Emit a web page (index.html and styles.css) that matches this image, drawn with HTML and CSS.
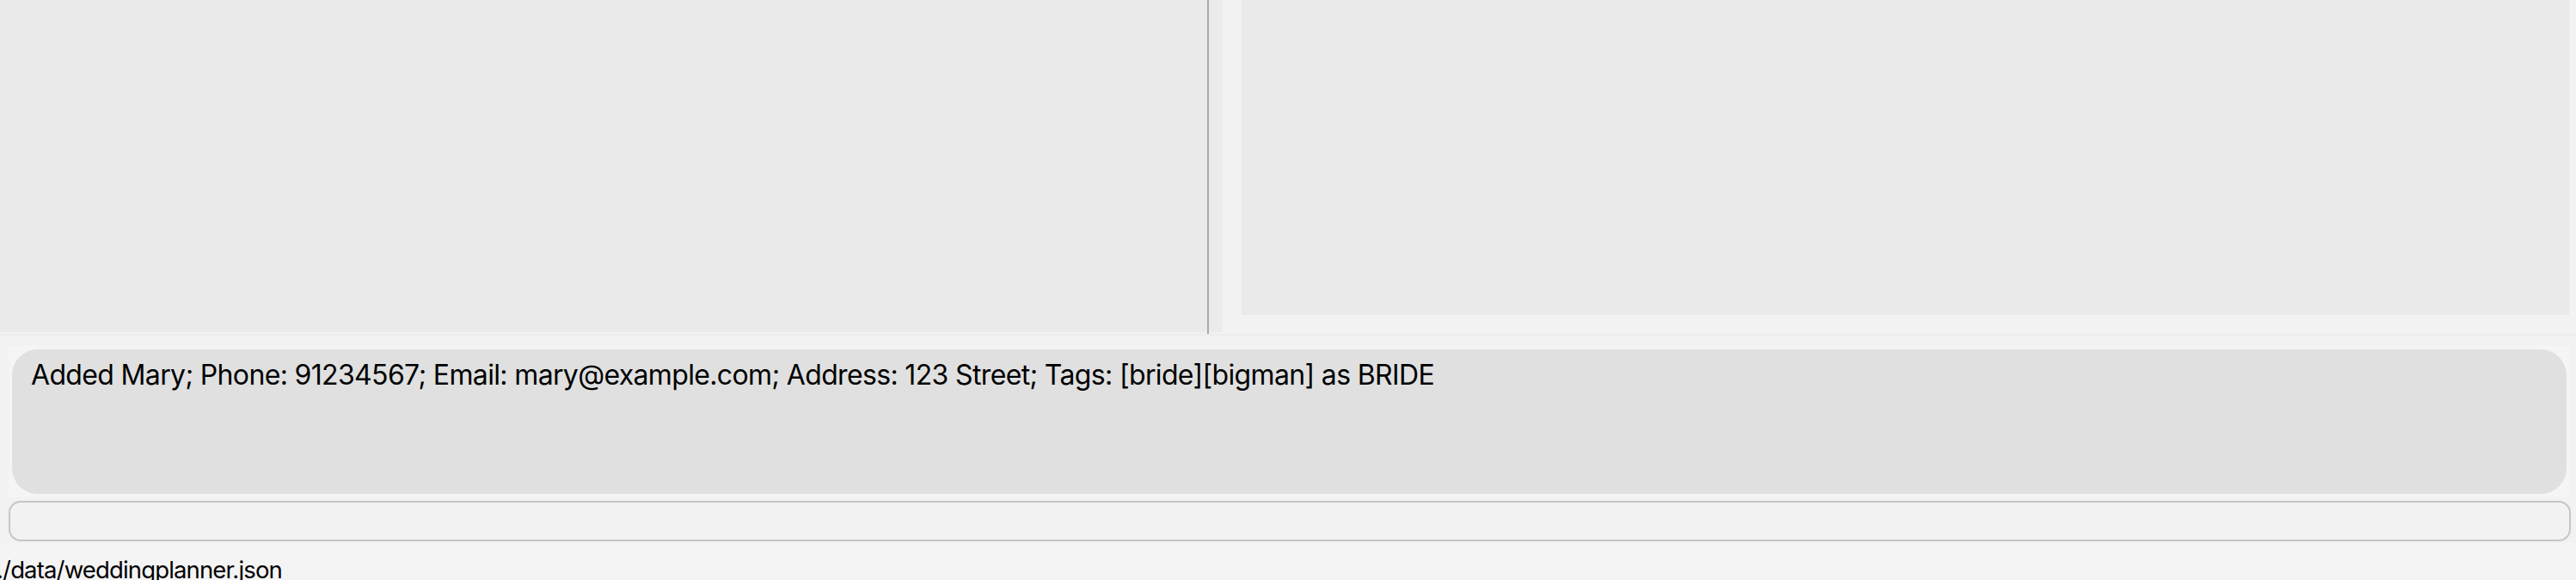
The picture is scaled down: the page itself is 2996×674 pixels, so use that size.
FILE: index.html
```html
<!DOCTYPE html>
<html>
<head>
<meta charset="utf-8">
<link rel="stylesheet" href="styles.css">
</head>
<body>
<div class="app">
  <div class="split">
    <div class="list-pane"></div>
    <div class="divider"></div>
    <div class="right-pane">
      <div class="right-inner">
        <div class="detail-panel"></div>
      </div>
    </div>
  </div>
  <div class="sep"></div>
  <div class="result-wrap">
    <div class="result-frame">
      <div class="result-box">Added Mary; Phone: 91234567; Email: mary@example.com; Address: 123 Street; Tags: [bride][bigman] as BRIDE</div>
    </div>
  </div>
  <div class="command-wrap">
    <div class="command-box"></div>
  </div>
  <div class="status-bar"><span class="status-text">./data/weddingplanner.json</span></div>
</div>
</body>
</html>
```
FILE: styles.css
```css
html, body {
  margin: 0;
  padding: 0;
  background: #f4f4f4;
  overflow: hidden;
}
.app {
  width: 2996px;
  height: 674px;
  display: flex;
  flex-direction: column;
  overflow: hidden;
  font-family: Inter, "Noto Sans", sans-serif;
  color: #000;
}
.app > * {
  flex: none;
}
.split {
  height: 388px;
  display: flex;
  background: #f2f2f2;
}
.list-pane {
  width: 1404px;
  height: 386px;
  background: #eaeaea;
}
.divider {
  width: 2px;
  background: #aaaaaa;
}
.right-pane {
  flex: 1;
  display: flex;
  background: #ebebeb;
  padding-left: 16px;
  height: 386px;
}
.right-inner {
  flex: 1;
  background: #f2f2f2;
  padding: 0 8px 20px 22px;
}
.detail-panel {
  height: 366px;
  background: #eaeaea;
}
.sep {
  height: 2px;
  background: #ebebeb;
}
.result-wrap {
  background: #f2f2f2;
  padding: 12px 7px 4px 10px;
}
.result-frame {
  background: #f5f5f5;
  padding: 4px;
}
.result-box {
  height: 168px;
  box-sizing: border-box;
  background: #e0e0e0;
  border-radius: 30px;
  padding: 10px 22px;
  font-size: 32px;
  line-height: 40px;
  letter-spacing: -0.65px;
  white-space: nowrap;
}
.command-wrap {
  background: #f2f2f2;
  padding: 0 6px 2px 10px;
}
.command-box {
  height: 47px;
  box-sizing: border-box;
  border: 2px solid #c6c6c6;
  border-radius: 14px;
  background: #f2f2f2;
}
.status-bar {
  height: 43px;
  box-sizing: border-box;
  overflow: hidden;
  background: #f4f4f4;
  padding-top: 14px;
}
.status-text {
  display: block;
  margin-left: -4px;
  font-size: 27.5px;
  line-height: 34px;
  letter-spacing: -0.85px;
  white-space: nowrap;
}
```
